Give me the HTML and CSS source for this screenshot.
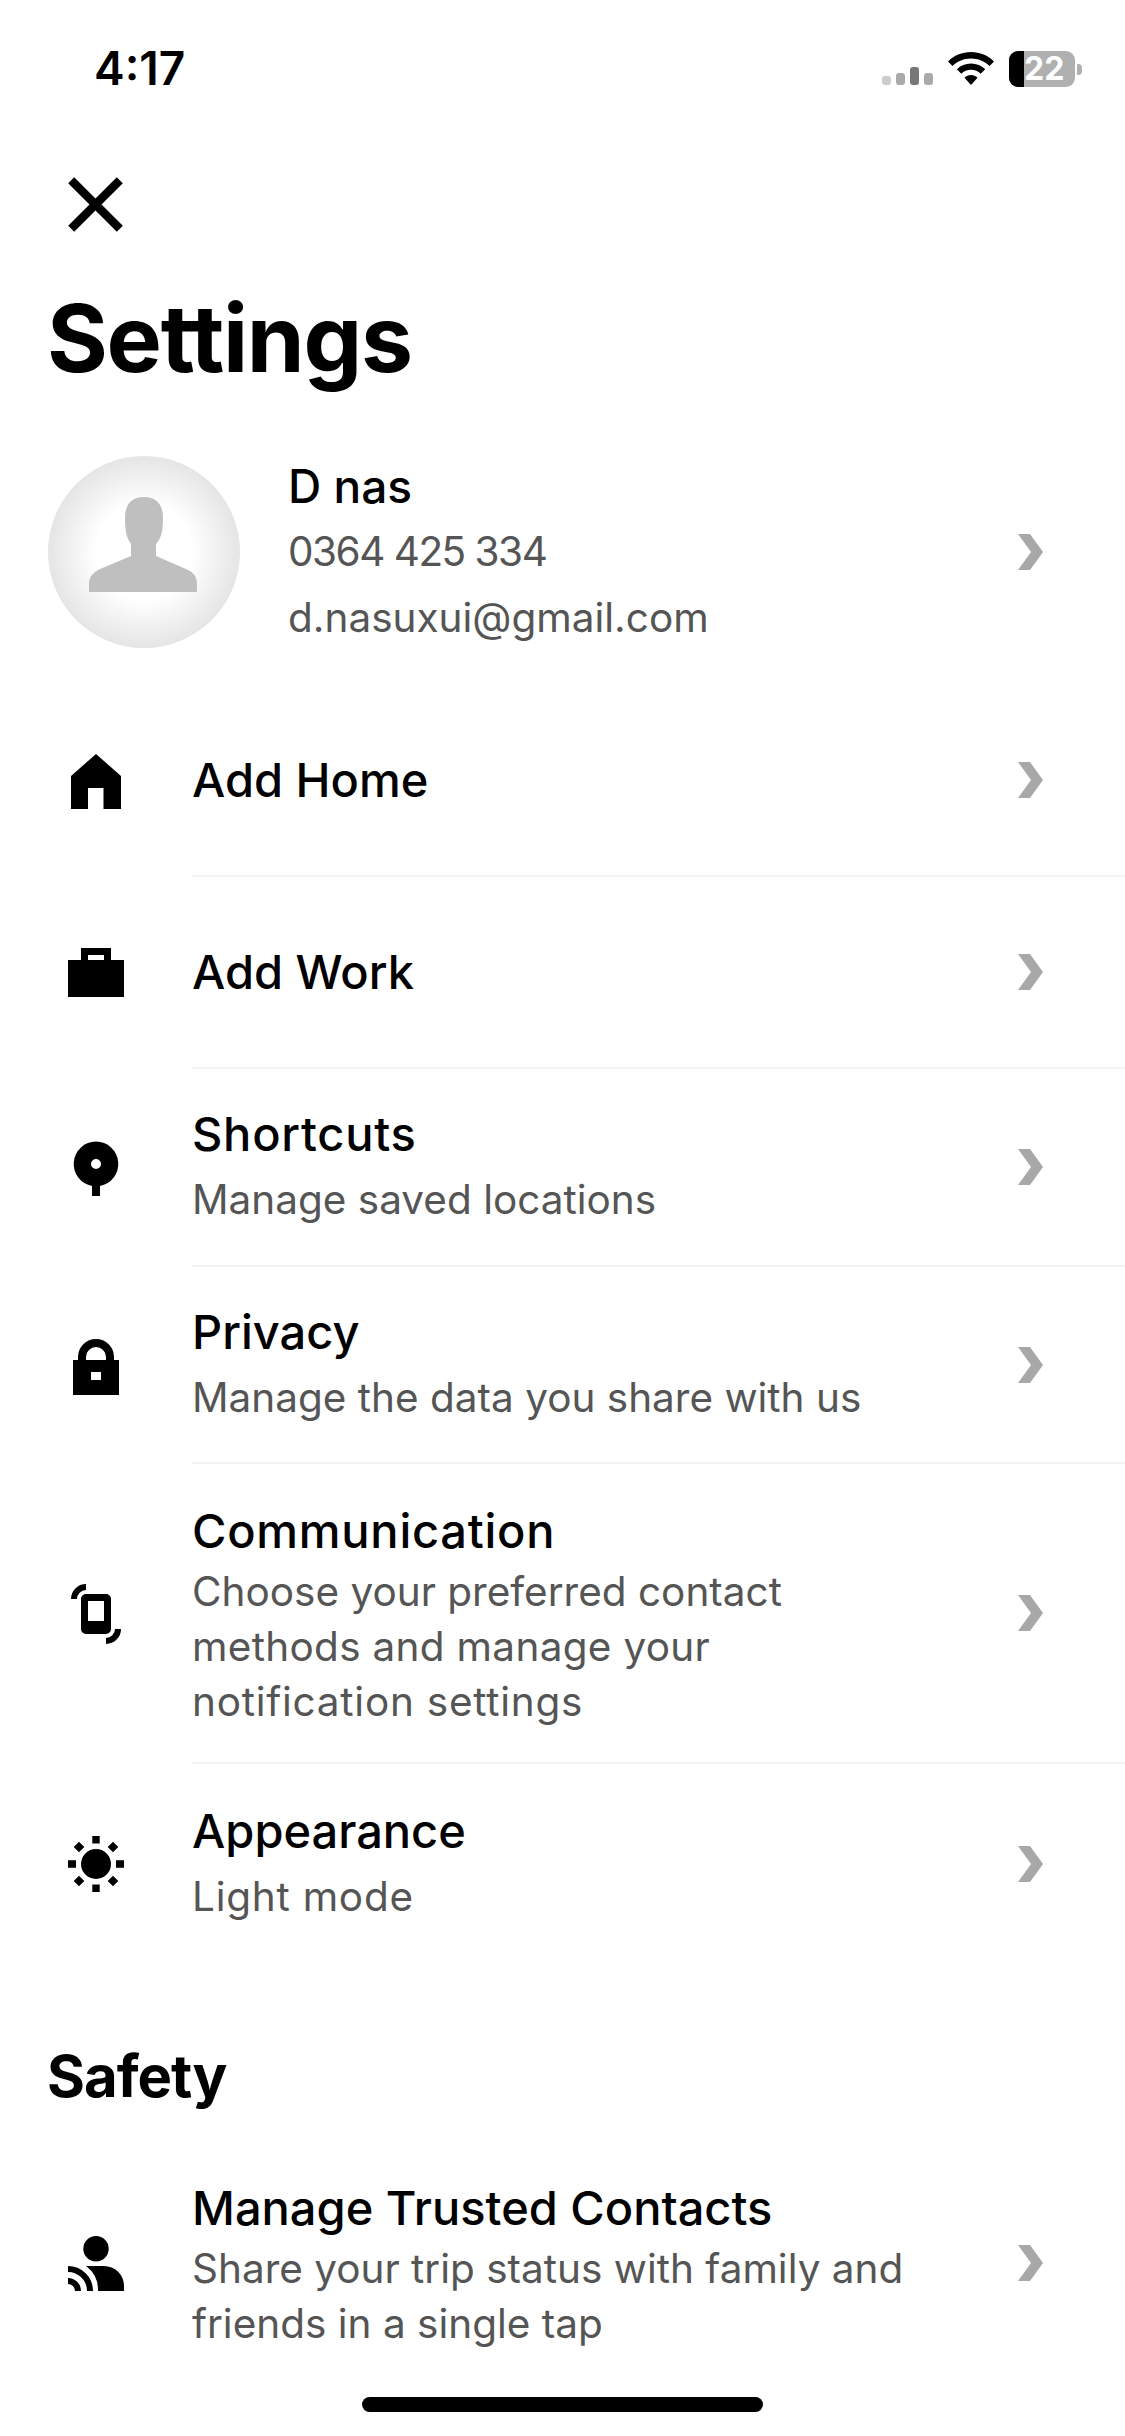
FILE: index.html
```html
<!DOCTYPE html>
<html lang="en">
<head>
<meta charset="utf-8">
<title>Settings</title>
<link rel="stylesheet" href="styles.css">
</head>
<body>
<main class="page">
  <header class="status">
    <span class="time">4:17</span>
    <div class="status-icons">
      <div class="signal"><i class="b1"></i><i class="b2"></i><i class="b3"></i><i class="b4"></i></div>
      <svg class="wifi" viewBox="0 0 46 33"><path d="M23 0C14 0 6 3.500 0 9.500L4.500 14C9.500 9.200 16 6.500 23 6.500S36.500 9.200 41.500 14L46 9.500C40 3.500 32 0 23 0Z"/><path d="M23 11.500C17.500 11.500 12.500 13.600 8.800 17.300L13.300 21.800C15.800 19.300 19.200 17.800 23 17.800S30.200 19.300 32.700 21.800L37.200 17.300C33.500 13.600 28.500 11.500 23 11.500Z"/><path d="M23 23C20.500 23 18.200 24 16.500 25.700L23 33L29.500 25.700C27.800 24 25.500 23 23 23Z"/></svg>
      <div class="battery"><div class="battery-body"><span class="battery-fill"></span><span class="battery-num">22</span></div><span class="battery-nub"></span></div>
    </div>
  </header>

  <button class="close" aria-label="Close">
    <svg viewBox="0 0 55 55"><path d="M3.200 3.200L51.800 51.800M51.800 3.200L3.200 51.800"/></svg>
  </button>

  <h1 class="title">Settings</h1>

  <section class="profile">
    <svg class="avatar" viewBox="0 0 192 192">
      <defs><radialGradient id="av"><stop offset="0.5" stop-color="#fff"/><stop offset="1" stop-color="#e5e5e5"/></radialGradient></defs>
      <circle cx="96" cy="96" r="96" fill="url(#av)"/>
      <path fill="#bfbfbf" d="M41 136V128C41 120 46 116 52 113L83 100V88C78 82 77 72 77 62C77 48 84 41 96 41C108 41 115 48 115 62C115 72 114 82 108 88V100L138 113C145 116 149 120 149 128V136Z"/>
    </svg>
    <div class="profile-text">
      <div class="name">D nas</div>
      <div class="sub phone">0364 425 334</div>
      <div class="sub">d.nasuxui@gmail.com</div>
    </div>
    <svg class="chev" viewBox="0 0 25 36"><path d="M0 0H12L25 18L12 36H0L13 18Z"/></svg>
  </section>

  <section class="list first">
    <a class="row h192">
      <svg class="ico" viewBox="0 0 72 72"><path fill-rule="evenodd" d="M36 9L61 31V64H43.500V43H28V64H11V31Z"/></svg>
      <div class="row-main"><div class="label">Add Home</div><svg class="chev" viewBox="0 0 25 36"><path d="M0 0H12L25 18L12 36H0L13 18Z"/></svg></div>
    </a>
    <a class="row h192">
      <svg class="ico" viewBox="0 0 72 72"><path fill-rule="evenodd" d="M21 11H51V23H64V60H8V23H21ZM28 18V23H44V18Z"/></svg>
      <div class="row-main"><div class="label">Add Work</div><svg class="chev" viewBox="0 0 25 36"><path d="M0 0H12L25 18L12 36H0L13 18Z"/></svg></div>
    </a>
    <a class="row h198">
      <svg class="ico" viewBox="0 0 72 72"><path fill-rule="evenodd" d="M36 9.500A22.500 22.500 0 0 1 40 54.100V64H32V54.100A22.500 22.500 0 0 1 36 9.500ZM36 27A5 5 0 1 0 36 37A5 5 0 1 0 36 27Z"/></svg>
      <div class="row-main"><div class="col"><div class="label spaced">Shortcuts</div><div class="sub">Manage saved locations</div></div><svg class="chev" viewBox="0 0 25 36"><path d="M0 0H12L25 18L12 36H0L13 18Z"/></svg></div>
    </a>
    <a class="row h197">
      <svg class="ico" viewBox="0 0 72 72"><path fill-rule="evenodd" d="M18 30V27A18 18 0 0 1 54 27V30H59V65H13V30ZM26 30H46V27A10 10 0 0 0 26 27ZM31 42V50H41V42Z"/></svg>
      <div class="row-main"><div class="col"><div class="label">Privacy</div><div class="sub">Manage the data you share with us</div></div><svg class="chev" viewBox="0 0 25 36"><path d="M0 0H12L25 18L12 36H0L13 18Z"/></svg></div>
    </a>
    <a class="row h300">
      <svg class="ico" viewBox="0 0 72 72"><path fill-rule="evenodd" d="M26 16H46A5 5 0 0 1 51 21V51A5 5 0 0 1 46 56H26A5 5 0 0 1 21 51V21A5 5 0 0 1 26 16ZM28 23V43H44V23Z"/><path class="arc" d="M14 21A12 12 0 0 1 26 9"/><path class="arc" d="M58 51A12 12 0 0 1 46 63"/></svg>
      <div class="row-main"><div class="col"><div class="label spaced">Communication</div><div class="sub tight">Choose your preferred contact<br><span class="spaced-s">methods and manage your</span><br><span class="spaced">notification settings</span></div></div><svg class="chev" viewBox="0 0 25 36"><path d="M0 0H12L25 18L12 36H0L13 18Z"/></svg></div>
    </a>
    <a class="row h199 last">
      <svg class="ico" viewBox="0 0 72 72"><circle cx="36" cy="36" r="15"/><path d="M32.300 8H39.700V15.600H32.300ZM32.300 56.400H39.700V64H32.300ZM8 32.300H16V39.700H8ZM56 32.300H64V39.700H56ZM19 13.700L24.300 19L19 24.300L13.700 19ZM53 13.700L58.300 19L53 24.300L47.700 19ZM19 47.700L24.300 53L19 58.300L13.700 53ZM53 47.700L58.300 53L53 58.300L47.700 53Z"/></svg>
      <div class="row-main"><div class="col"><div class="label">Appearance</div><div class="sub"><span class="spaced">Light mode</span></div></div><svg class="chev" viewBox="0 0 25 36"><path d="M0 0H12L25 18L12 36H0L13 18Z"/></svg></div>
    </a>
  </section>

  <h2 class="section-title">Safety</h2>

  <section class="list">
    <a class="row trusted last">
      <svg class="ico" viewBox="0 0 72 72"><circle cx="36" cy="21.700" r="12.700"/><path d="M26 39H44A20 20 0 0 1 64 59V64H38A30 30 0 0 0 26 39Z"/><path class="arc wide" d="M8 42A22 22 0 0 1 30 64"/><path class="arc wide" d="M8 54A10 10 0 0 1 18 64"/></svg>
      <div class="row-main"><div class="col"><div class="label">Manage Trusted Contacts</div><div class="sub tight">Share your trip status with family and<br>friends in a single tap</div></div><svg class="chev" viewBox="0 0 25 36"><path d="M0 0H12L25 18L12 36H0L13 18Z"/></svg></div>
    </a>
  </section>

  <div class="home-indicator"></div>
</main>
</body>
</html>
```
FILE: styles.css
```css
* { box-sizing: border-box; }
html, body { margin: 0; padding: 0; background: #fff; }
.page {
  width: 1125px;
  height: 2436px;
  position: relative;
  overflow: hidden;
  font-family: Inter, "Liberation Sans", sans-serif;
  color: #000;
}
.status {
  height: 136px;
  padding: 44px 43px 0 94px;
  display: flex;
  justify-content: space-between;
  align-items: flex-start;
}
.time { font-size: 46px; line-height: 48px; font-weight: 600; }
.status-icons { display: flex; align-items: flex-end; margin-top: 7px; }
.signal { display: flex; align-items: flex-end; gap: 5px; height: 34px; padding-bottom: 2px; width: 66px; }
.signal i { display: block; width: 9px; border-radius: 3px; }
.signal .b1 { height: 9px; background: #ccc; }
.signal .b2 { height: 12px; background: #aaa; }
.signal .b3 { height: 18px; background: #777; }
.signal .b4 { height: 12px; background: #aaa; }
.wifi { width: 46px; height: 33px; margin-bottom: 2px; }
.battery { display: flex; align-items: center; margin-left: 15px; }
.battery-body { width: 66px; height: 36px; background: #b0b0b0; border-radius: 9px; position: relative; display: flex; align-items: center; }
.battery-fill { position: absolute; left: 0; top: 0; bottom: 0; width: 15px; background: #000; border-radius: 9px 0 0 9px; }
.battery-num { position: relative; margin-left: 15px; color: #fff; font-size: 32px; line-height: 36px; font-weight: 700; }
.battery-nub { width: 5px; height: 11px; margin-left: 2px; background: #b0b0b0; border-radius: 0 4px 4px 0; }
.close { display: block; width: 55px; height: 55px; margin: 41px 0 0 68px; padding: 0; border: 0; background: none; }
.close svg { display: block; width: 55px; height: 55px; fill: none; stroke: #000; stroke-width: 8.500; }
.title { margin: 51px 0 0 47px; font-size: 93px; line-height: 110px; font-weight: 700; letter-spacing: -1.300px; }
.profile { display: flex; align-items: center; margin-top: 60px; padding: 0 82px 0 48px; }
.avatar { width: 192px; height: 192px; flex: none; }
.profile-text { flex: 1; margin-left: 48px; }
.name { font-size: 46px; line-height: 66px; font-weight: 500; }
.sub { font-size: 40.500px; line-height: 66px; color: #555; }
.sub.tight { line-height: 55px; }
.sub.phone { letter-spacing: -1.500px; }
.chev { width: 25px; height: 36px; fill: #a8a8a8; flex: none; }
.list { display: flex; flex-direction: column; }
.list.first { margin-top: 34px; }
.row { display: flex; align-items: stretch; padding-left: 60px; }
.h192 { height: 192px; }
.h198 { height: 198px; }
.h199 { height: 199px; }
.h197 { height: 197px; }
.h300 { height: 300px; }
.ico { width: 72px; height: 72px; flex: none; align-self: center; margin-right: 60px; }
.arc { fill: none; stroke: #000; stroke-width: 6; }
.row-main { flex: 1; display: flex; align-items: center; justify-content: space-between; padding-right: 82px; border-bottom: 2px solid #f2f2f2; }
.last .row-main { border-bottom: 0; }
.label { font-size: 47px; line-height: 66px; font-weight: 500; }
.spaced { letter-spacing: 0.750px; }
.spaced-s { letter-spacing: 0.300px; }
.section-title { margin: 78px 0 0 47px; font-size: 58px; line-height: 70px; font-weight: 700; letter-spacing: -1px; }
.trusted { height: 240px; margin-top: 32px; }
.home-indicator { position: absolute; left: 362px; top: 2397px; width: 401px; height: 15px; border-radius: 8px; background: #000; }
```
